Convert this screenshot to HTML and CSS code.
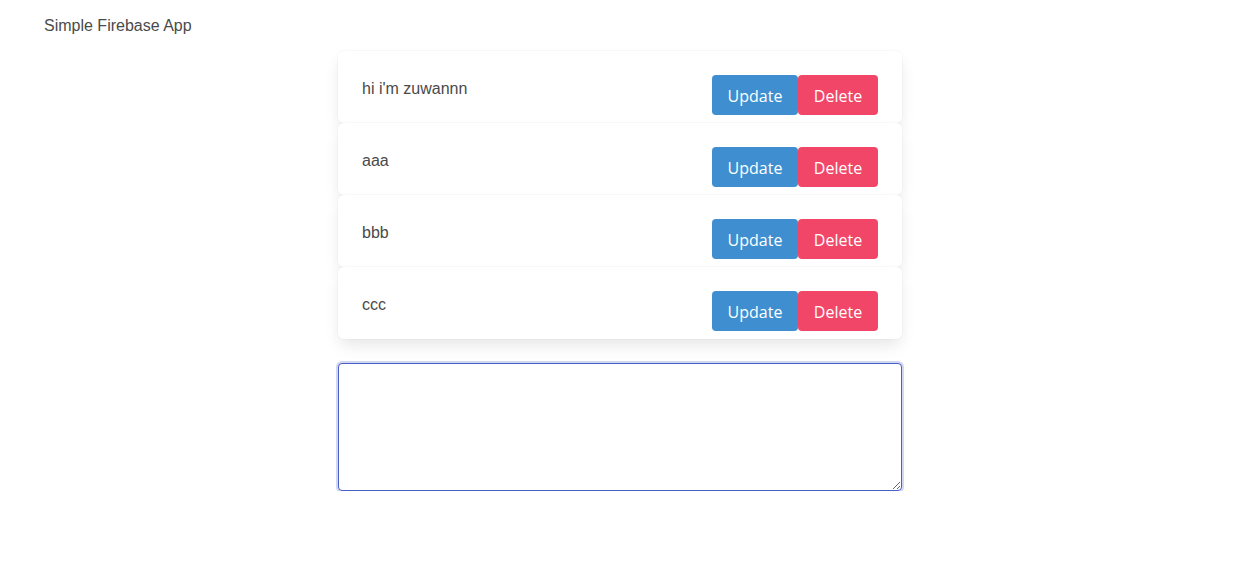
FILE: index.html
```html
<!DOCTYPE html>
<html lang="en">
<head>
<meta charset="utf-8">
<title>Simple Firebase App</title>
<link rel="stylesheet" href="styles.css">
</head>
<body>
<nav class="navbar">
  <span class="brand">Simple Firebase App</span>
</nav>
<div class="page">
  <main class="main">
    <section class="list">
      <div class="box">
        <p class="item-text">hi i'm zuwannn</p>
        <div class="buttons">
          <button class="btn btn-info">Update</button>
          <button class="btn btn-danger">Delete</button>
        </div>
      </div>
      <div class="box">
        <p class="item-text">aaa</p>
        <div class="buttons">
          <button class="btn btn-info">Update</button>
          <button class="btn btn-danger">Delete</button>
        </div>
      </div>
      <div class="box">
        <p class="item-text">bbb</p>
        <div class="buttons">
          <button class="btn btn-info">Update</button>
          <button class="btn btn-danger">Delete</button>
        </div>
      </div>
      <div class="box">
        <p class="item-text">ccc</p>
        <div class="buttons">
          <button class="btn btn-info">Update</button>
          <button class="btn btn-danger">Delete</button>
        </div>
      </div>
    </section>
    <textarea class="textarea" autofocus></textarea>
  </main>
</div>
</body>
</html>
```
FILE: styles.css
```css
html, body {
  margin: 0;
  padding: 0;
  background: #fff;
}
body {
  font-family: "Liberation Sans", Arial, sans-serif;
  font-size: 16px;
  line-height: 24px;
  color: #4a4a4a;
}
.navbar {
  height: 51px;
  display: flex;
  align-items: center;
  padding-left: 44px;
}
.brand {
  display: block;
}
.page {
  display: flex;
  justify-content: center;
  padding-left: 5px;
}
.main {
  width: 564px;
  display: flex;
  flex-direction: column;
}
.list {
  display: flex;
  flex-direction: column;
}
.box {
  height: 72px;
  box-sizing: border-box;
  padding: 24px 24px 8px;
  display: flex;
  justify-content: space-between;
  align-items: flex-start;
  background: #fff;
  border-radius: 6px;
  box-shadow: 0 8px 16px -2px rgba(10, 10, 10, 0.1), 0 0 0 1px rgba(10, 10, 10, 0.02);
}
.item-text {
  margin: 0;
  padding-top: 2px;
}
.buttons {
  display: flex;
}
.btn {
  font-family: "Open Sans", "Noto Sans", sans-serif;
  font-size: 16px;
  height: 40px;
  padding: 0;
  border: 1px solid transparent;
  border-radius: 4px;
  color: #fff;
  cursor: pointer;
  line-height: 38px;
  padding-top: 1px;
}
.btn-info {
  background: #3e8ed0;
  width: 86px;
}
.btn-danger {
  background: #f14668;
  width: 80px;
}
.textarea {
  margin-top: 24px;
  height: 128px;
  box-sizing: border-box;
  width: 100%;
  padding: 11px;
  border: 1px solid #485fc7;
  border-radius: 4px;
  box-shadow: 0 0 0 2px rgba(72, 95, 199, 0.25);
  outline: none;
  resize: vertical;
  font-family: "Open Sans", sans-serif;
  font-size: 16px;
}
```
